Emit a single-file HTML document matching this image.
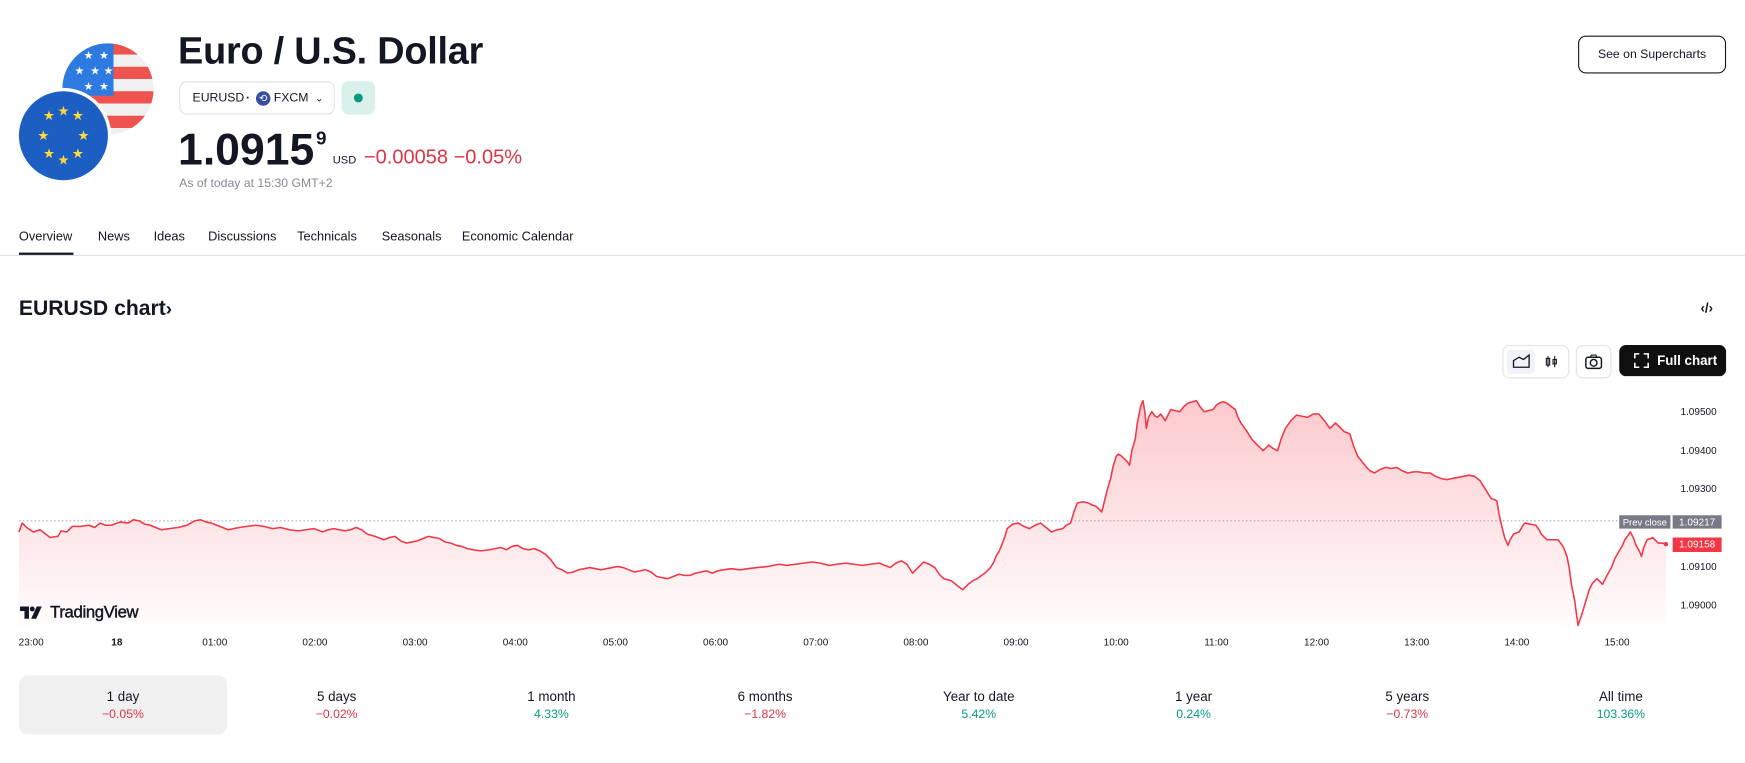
<!DOCTYPE html>
<html><head><meta charset="utf-8">
<style>
html,body{margin:0;padding:0;background:#fff;width:1745px;height:763px;overflow:hidden}
#w{position:absolute;left:0;top:0;width:1568px;height:686px;transform:scale(1.11288);transform-origin:0 0;font-family:"Liberation Sans","DejaVu Sans",sans-serif;color:#131722}
.a{position:absolute;white-space:nowrap}
.tab{position:absolute;top:207px;font-size:11.5px;color:#131722}
.per{position:absolute;top:607px;width:187px;height:53px;text-align:center;font-size:12px}
.per .l{margin-top:12px;color:#131722}
.per .v{margin-top:3px;font-size:11px}
.r{color:#dc3545}.g{color:#089981}
.ax{position:absolute;left:1510px;font-size:9px;color:#131722}
.tm{position:absolute;top:572px;font-size:9px;color:#131722;transform:translateX(-50%)}
</style></head><body><div id="w">
<svg class="a" style="left:15px;top:38px" width="130" height="125" viewBox="0 0 130 125">
<defs><clipPath id="us"><circle cx="82" cy="42" r="41"/></clipPath></defs>
<g clip-path="url(#us)">
<rect x="40" y="0" width="90" height="90" fill="#f0f0f0"/>
<rect x="40" y="0" width="90" height="11" fill="#ef5350"/>
<rect x="40" y="22" width="90" height="11" fill="#ef5350"/>
<rect x="40" y="44" width="90" height="11" fill="#ef5350"/>
<rect x="40" y="66" width="90" height="11" fill="#ef5350"/>
<rect x="40" y="0" width="47" height="48" fill="#2d7be0"/>
<g fill="#fff" font-size="10" font-family="DejaVu Sans">
<text x="60" y="15">★</text><text x="74" y="15">★</text>
<text x="52" y="29">★</text><text x="66" y="29">★</text><text x="78" y="29">★</text>
<text x="60" y="43">★</text><text x="74" y="43">★</text></g>
</g>
<circle cx="42" cy="84" r="43" fill="#fff"/>
<circle cx="42" cy="84" r="40" fill="#1d5ec3"/>
<g fill="#ffd83b" font-size="12" font-family="DejaVu Sans" text-anchor="middle">
<text x="42" y="66">★</text><text x="55" y="70">★</text><text x="60" y="88">★</text><text x="55" y="104">★</text>
<text x="42" y="110">★</text><text x="29" y="104">★</text><text x="24" y="88">★</text><text x="29" y="70">★</text>
</g></svg>

<div class="a" style="left:160px;top:27px;font-size:34px;font-weight:bold;letter-spacing:-0.2px">Euro / U.S. Dollar</div>
<div class="a" style="left:161px;top:73px;width:138px;height:28px;border:1px solid #e0e3eb;border-radius:7px;font-size:11px;line-height:28px">
<span style="position:absolute;left:11px">EURUSD</span><span style="position:absolute;left:59px;font-weight:bold">·</span>
<span style="position:absolute;left:68px;top:8px;width:13px;height:13px;border-radius:50%;background:#3a4fa0;color:#fff;font-size:9px;line-height:13px;text-align:center">⟲</span>
<span style="position:absolute;left:84px">FXCM</span><span style="position:absolute;left:121px;font-size:9px">⌄</span></div>
<div class="a" style="left:307px;top:73px;width:30px;height:30px;border-radius:6px;background:#daf0ea"><div style="position:absolute;left:11px;top:11px;width:8px;height:8px;border-radius:50%;background:#089981"></div></div>
<div class="a" style="left:160px;top:113px;font-size:40px;font-weight:bold">1.0915</div>
<div class="a" style="left:284px;top:115px;font-size:17px;font-weight:bold">9</div>
<div class="a" style="left:299px;top:139px;font-size:10px">USD</div>
<div class="a r" style="left:327px;top:131px;font-size:18px;color:#dc3545">−0.00058 −0.05%</div>
<div class="a" style="left:161px;top:159px;font-size:11px;color:#868993">As of today at 15:30 GMT+2</div>

<div class="a" style="left:1418px;top:32px;width:131px;height:32px;border:1px solid #131722;border-radius:7px;font-size:11px;line-height:32px;text-align:center">See on Supercharts</div>

<div class="tab" style="left:17px">Overview</div>
<div class="tab" style="left:88px">News</div>
<div class="tab" style="left:138px">Ideas</div>
<div class="tab" style="left:187px">Discussions</div>
<div class="tab" style="left:267px">Technicals</div>
<div class="tab" style="left:343px">Seasonals</div>
<div class="tab" style="left:415px">Economic Calendar</div>
<div class="a" style="left:17px;top:227px;width:49px;height:3px;background:#131722"></div>
<div class="a" style="left:0;top:229px;width:1568px;height:1px;background:#e0e3eb"></div>

<div class="a" style="left:17px;top:267px;font-size:19px;font-weight:bold">EURUSD chart<span style="font-size:17px">›</span></div>
<div class="a" style="left:1528px;top:270px;font-size:12px;font-weight:bold">‹/›</div>

<div class="a" style="left:1350px;top:310px;width:58px;height:28px;border:1px solid #e0e3eb;border-radius:6px"><div style="position:absolute;left:3px;top:3px;width:25px;height:22px;background:#f0f3fa;border-radius:4px"></div>
<svg style="position:absolute;left:0;top:0" width="58" height="28"><path d="M9 19V13l5-3 4 2 5-4v11z" fill="none" stroke="#131722" stroke-width="1.2"/><path d="M40 9v10M46 9v10" stroke="#131722"/><rect x="38.5" y="11" width="3" height="6" fill="none" stroke="#131722"/><rect x="44.5" y="12" width="3" height="4" fill="none" stroke="#131722"/></svg></div>
<div class="a" style="left:1416px;top:310px;width:30px;height:28px;border:1px solid #e0e3eb;border-radius:6px"><svg width="30" height="28"><rect x="8" y="10" width="14" height="10" rx="2" fill="none" stroke="#131722" stroke-width="1.3"/><path d="M12 10l1-2h4l1 2" fill="none" stroke="#131722"/><circle cx="15" cy="15" r="3" fill="none" stroke="#131722" stroke-width="1.3"/></svg></div>
<div class="a" style="left:1455px;top:310px;width:96px;height:28px;background:#0f0f0f;border-radius:6px;color:#fff;font-size:12px;font-weight:bold;line-height:28px"><svg style="position:absolute;left:13px;top:7px" width="14" height="14"><path d="M1 5V1h4M9 1h4v4M13 9v4H9M5 13H1V9" fill="none" stroke="#fff" stroke-width="1.4"/></svg><span style="position:absolute;left:34px">Full chart</span></div>

<svg class="a" style="left:0;top:0" width="1568" height="686">
<defs><linearGradient id="fg" x1="0" y1="350" x2="0" y2="565" gradientUnits="userSpaceOnUse"><stop offset="0" stop-color="#f23645" stop-opacity="0.28"/><stop offset="1" stop-color="#f23645" stop-opacity="0.01"/></linearGradient></defs>
<line x1="17" y1="468" x2="1455" y2="468" stroke="#b2b5be" stroke-width="1" stroke-dasharray="1.5 2"/>
<path fill="url(#fg)" stroke="none" d="M17,565 L17,478 20,470 24,474 30,478 36,476 45,483 52,482 55,477 60,478 65,473 72,473 80,472 85,474 90,470 95,472 100,472 108,469 115,470 120,467 125,468 130,471 135,472 140,474 145,476 152,475 160,474 168,472 175,468 180,467 185,469 190,470 195,472 200,474 205,476 210,475 215,474 222,473 230,472 237,473 245,475 252,474 260,476 268,477 275,476 282,475 290,478 295,476 300,475 305,476 310,477 315,476 320,474 325,476 330,480 337,482 345,485 350,483 355,482 360,486 365,488 370,487 375,486 380,484 385,482 390,483 395,484 400,487 405,488 410,490 415,491 420,493 425,494 432,495 440,494 445,493 450,492 455,494 460,491 465,490 470,493 475,494 480,493 485,495 490,498 495,503 500,510 505,512 510,515 515,514 520,512 525,511 530,510 535,511 540,512 545,511 550,510 555,509 560,510 565,512 570,514 575,513 580,512 585,514 590,518 595,519 600,520 605,518 610,516 615,517 620,517 625,515 630,514 635,513 640,515 645,513 650,512 657,511 665,512 672,511 680,510 690,509 700,507 707,508 715,507 722,506 730,505 737,506 745,508 752,507 760,506 767,507 775,508 782,507 790,506 795,508 800,510 805,506 810,504 815,507 820,515 825,510 830,505 835,507 840,510 844,516 848,520 852,521 855,522 860,526 865,530 870,525 874,522 878,520 882,517 885,515 888,512 890,510 893,505 895,500 898,495 900,490 903,482 905,475 910,471 915,470 920,473 925,475 930,472 935,470 940,474 945,478 950,476 955,475 958,472 962,470 965,460 968,452 973,451 978,452 982,454 985,455 988,458 990,460 993,448 995,440 998,430 1000,420 1003,410 1005,408 1008,410 1010,412 1013,415 1015,418 1017,405 1020,395 1022,380 1025,365 1027,360 1029,372 1030,385 1032,375 1035,370 1038,374 1040,375 1043,372 1047,378 1050,372 1052,368 1056,369 1060,370 1064,365 1068,362 1072,361 1075,360 1078,365 1082,370 1086,369 1090,368 1093,364 1096,362 1099,361 1102,362 1106,365 1110,368 1112,374 1115,380 1120,387 1125,395 1130,400 1135,405 1138,402 1140,400 1144,403 1148,405 1151,395 1155,385 1160,378 1165,373 1170,374 1175,375 1180,372 1185,372 1190,378 1195,385 1198,382 1200,380 1204,384 1208,388 1211,389 1213,390 1216,400 1220,410 1224,415 1228,420 1231,423 1235,425 1240,422 1245,420 1250,421 1255,420 1260,423 1265,425 1270,424 1275,424 1280,425 1285,425 1290,428 1295,430 1300,431 1305,430 1310,429 1315,428 1320,427 1325,428 1330,432 1335,440 1338,445 1340,448 1343,449 1345,450 1347,462 1350,475 1352,483 1355,490 1357,485 1360,480 1362,479 1365,478 1368,473 1370,470 1375,471 1380,472 1383,476 1385,480 1388,483 1390,485 1395,485 1400,485 1403,489 1405,492 1408,500 1410,510 1412,525 1415,540 1417,555 1418,562 1420,556 1422,550 1425,540 1428,530 1431,524 1435,520 1438,523 1440,525 1444,517 1448,510 1451,502 1455,495 1458,490 1460,485 1463,481 1465,478 1468,484 1470,490 1473,495 1475,500 1477,492 1480,485 1483,484 1485,483 1488,486 1490,488 1494,488 1497,489 L1497,565 Z"/>
<polyline fill="none" stroke="#f23645" stroke-width="1.4" stroke-linejoin="round" points="17,478 20,470 24,474 30,478 36,476 45,483 52,482 55,477 60,478 65,473 72,473 80,472 85,474 90,470 95,472 100,472 108,469 115,470 120,467 125,468 130,471 135,472 140,474 145,476 152,475 160,474 168,472 175,468 180,467 185,469 190,470 195,472 200,474 205,476 210,475 215,474 222,473 230,472 237,473 245,475 252,474 260,476 268,477 275,476 282,475 290,478 295,476 300,475 305,476 310,477 315,476 320,474 325,476 330,480 337,482 345,485 350,483 355,482 360,486 365,488 370,487 375,486 380,484 385,482 390,483 395,484 400,487 405,488 410,490 415,491 420,493 425,494 432,495 440,494 445,493 450,492 455,494 460,491 465,490 470,493 475,494 480,493 485,495 490,498 495,503 500,510 505,512 510,515 515,514 520,512 525,511 530,510 535,511 540,512 545,511 550,510 555,509 560,510 565,512 570,514 575,513 580,512 585,514 590,518 595,519 600,520 605,518 610,516 615,517 620,517 625,515 630,514 635,513 640,515 645,513 650,512 657,511 665,512 672,511 680,510 690,509 700,507 707,508 715,507 722,506 730,505 737,506 745,508 752,507 760,506 767,507 775,508 782,507 790,506 795,508 800,510 805,506 810,504 815,507 820,515 825,510 830,505 835,507 840,510 844,516 848,520 852,521 855,522 860,526 865,530 870,525 874,522 878,520 882,517 885,515 888,512 890,510 893,505 895,500 898,495 900,490 903,482 905,475 910,471 915,470 920,473 925,475 930,472 935,470 940,474 945,478 950,476 955,475 958,472 962,470 965,460 968,452 973,451 978,452 982,454 985,455 988,458 990,460 993,448 995,440 998,430 1000,420 1003,410 1005,408 1008,410 1010,412 1013,415 1015,418 1017,405 1020,395 1022,380 1025,365 1027,360 1029,372 1030,385 1032,375 1035,370 1038,374 1040,375 1043,372 1047,378 1050,372 1052,368 1056,369 1060,370 1064,365 1068,362 1072,361 1075,360 1078,365 1082,370 1086,369 1090,368 1093,364 1096,362 1099,361 1102,362 1106,365 1110,368 1112,374 1115,380 1120,387 1125,395 1130,400 1135,405 1138,402 1140,400 1144,403 1148,405 1151,395 1155,385 1160,378 1165,373 1170,374 1175,375 1180,372 1185,372 1190,378 1195,385 1198,382 1200,380 1204,384 1208,388 1211,389 1213,390 1216,400 1220,410 1224,415 1228,420 1231,423 1235,425 1240,422 1245,420 1250,421 1255,420 1260,423 1265,425 1270,424 1275,424 1280,425 1285,425 1290,428 1295,430 1300,431 1305,430 1310,429 1315,428 1320,427 1325,428 1330,432 1335,440 1338,445 1340,448 1343,449 1345,450 1347,462 1350,475 1352,483 1355,490 1357,485 1360,480 1362,479 1365,478 1368,473 1370,470 1375,471 1380,472 1383,476 1385,480 1388,483 1390,485 1395,485 1400,485 1403,489 1405,492 1408,500 1410,510 1412,525 1415,540 1417,555 1418,562 1420,556 1422,550 1425,540 1428,530 1431,524 1435,520 1438,523 1440,525 1444,517 1448,510 1451,502 1455,495 1458,490 1460,485 1463,481 1465,478 1468,484 1470,490 1473,495 1475,500 1477,492 1480,485 1483,484 1485,483 1488,486 1490,488 1494,488 1497,489"/>
<circle cx="1497" cy="489" r="2" fill="#f23645"/>
<g transform="translate(18,545)" fill="#131722"><path d="M0 0h8v11h-4V4H0z"/><circle cx="11" cy="2.2" r="2.2"/><path d="M15 0h4.5l-5 11H10z"/></g>
</svg>

<div class="ax" style="top:365px">1.09500</div>
<div class="ax" style="top:400px">1.09400</div>
<div class="ax" style="top:434px">1.09300</div>
<div class="ax" style="top:504px">1.09100</div>
<div class="ax" style="top:539px">1.09000</div>
<div class="a" style="left:1455px;top:463px;width:46px;height:12px;background:#787b86;color:#fff;font-size:8.5px;line-height:12px;text-align:center">Prev close</div>
<div class="a" style="left:1503px;top:463px;width:44px;height:12px;background:#787b86;color:#fff;font-size:9px;line-height:12px;text-align:center">1.09217</div>
<div class="a" style="left:1503px;top:483px;width:44px;height:13px;background:#f23645;color:#fff;font-size:9px;line-height:13px;text-align:center">1.09158</div>

<div class="a" style="left:45px;top:542px;font-size:15px;color:#131722;-webkit-text-stroke:0.4px #131722;letter-spacing:-0.3px">TradingView</div>

<div class="tm" style="left:28px">23:00</div>
<div class="tm" style="left:105px;font-weight:bold">18</div>
<div class="tm" style="left:193px">01:00</div>
<div class="tm" style="left:283px">02:00</div>
<div class="tm" style="left:373px">03:00</div>
<div class="tm" style="left:463px">04:00</div>
<div class="tm" style="left:553px">05:00</div>
<div class="tm" style="left:643px">06:00</div>
<div class="tm" style="left:733px">07:00</div>
<div class="tm" style="left:823px">08:00</div>
<div class="tm" style="left:913px">09:00</div>
<div class="tm" style="left:1003px">10:00</div>
<div class="tm" style="left:1093px">11:00</div>
<div class="tm" style="left:1183px">12:00</div>
<div class="tm" style="left:1273px">13:00</div>
<div class="tm" style="left:1363px">14:00</div>
<div class="tm" style="left:1453px">15:00</div>

<div class="per" style="left:17px;background:#f0f0f0;border-radius:8px"><div class="l">1 day</div><div class="v r">−0.05%</div></div>
<div class="per" style="left:209px"><div class="l">5 days</div><div class="v r">−0.02%</div></div>
<div class="per" style="left:402px"><div class="l">1 month</div><div class="v g">4.33%</div></div>
<div class="per" style="left:594px"><div class="l">6 months</div><div class="v r">−1.82%</div></div>
<div class="per" style="left:786px"><div class="l">Year to date</div><div class="v g">5.42%</div></div>
<div class="per" style="left:979px"><div class="l">1 year</div><div class="v g">0.24%</div></div>
<div class="per" style="left:1171px"><div class="l">5 years</div><div class="v r">−0.73%</div></div>
<div class="per" style="left:1363px"><div class="l">All time</div><div class="v g">103.36%</div></div>
</div></body></html>
